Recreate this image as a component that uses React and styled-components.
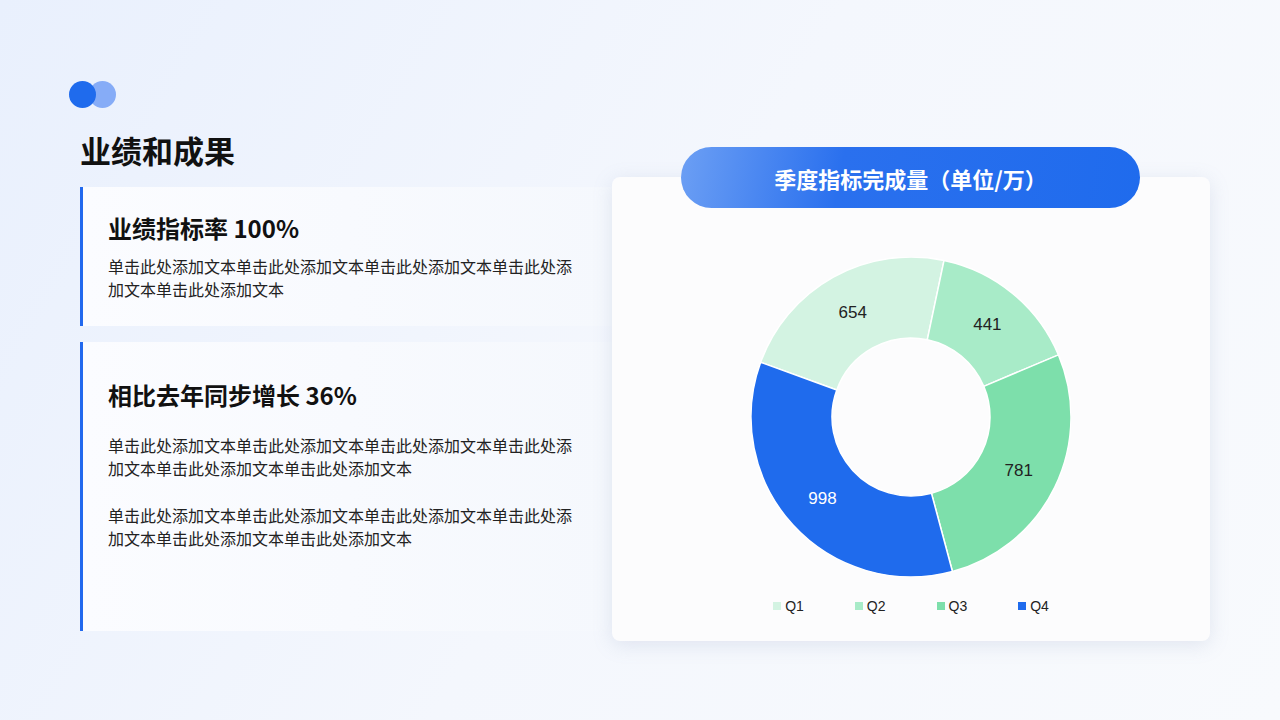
import React from "react";
import styled, { createGlobalStyle } from "styled-components";

const Global = createGlobalStyle`
  body { margin: 0; font-family: "Noto Sans CJK SC", "Noto Sans", sans-serif; }
`;

const Page = styled.div`
  width: 1280px; height: 720px; overflow: hidden; box-sizing: border-box;
  background: linear-gradient(120deg, #e9f0fd 0%, #f4f7fd 50%, #f8fafd 100%);
  padding: 80px 70px 0 80px; display: flex; flex-direction: column;
`;
const Dots = styled.div`position: relative; height: 28px; width: 48px; margin-left: -11px;`;
const Dot = styled.div`
  position: absolute; top: 1px; left: ${p => p.$l}px; width: 27px; height: 27px; border-radius: 50%;
  background: ${p => p.$c};
`;
const Title = styled.h1`margin: 22px 0 0; font-size: 31px; font-weight: 700; color: #111; line-height: 40px;`;
const Main = styled.div`display: flex; margin-top: 7px; height: 454px; position: relative;`;
const Left = styled.div`width: 532px; display: flex; flex-direction: column; gap: 16px; padding-top: 10px;`;
const Card = styled.div`
  border-left: 3px solid #2269ee; background: linear-gradient(90deg, #fbfcff, #f5f8fd);
  padding: ${p => p.$pt}px 30px 0 25px; height: ${p => p.$h}px; box-sizing: border-box;
`;
const CardTitle = styled.h2`margin: 0 0 ${p => p.$mb}px; font-size: 24px; font-weight: 700; color: #111; line-height: 30px;`;
const Para = styled.p`margin: 0 0 ${p => p.$mb || 0}px; width: 470px; font-size: 16px; color: #222; line-height: 23px;`;
const Right = styled.div`
  position: relative; width: 598px; height: 464px; background: #fcfcfd; border-radius: 8px;
  box-shadow: 0 4px 20px rgba(120,140,180,0.18); display: flex; flex-direction: column; align-items: center;
`;
const Pill = styled.div`
  position: absolute; top: -30px; left: 69px; width: 459px; height: 61px; border-radius: 31px;
  background: linear-gradient(100deg, #6c9ff4 0%, #2a70ee 35%, #1f6bed 100%);
  color: #fff; font-size: 22px; font-weight: 700; display: flex; align-items: center; justify-content: center;
`;
const Legend = styled.div`display: flex; gap: 51px; margin-top: 21px; font-family: "Liberation Sans", sans-serif; font-size: 14px; color: #222;`;
const LegItem = styled.div`display: flex; align-items: center; gap: 4px;`;
const Sw = styled.span`width: 8px; height: 8px; background: ${p => p.$c};`;

const data = [
  { n: "Q1", v: 654, c: "#d3f3e2" },
  { n: "Q2", v: 441, c: "#a8ebc8" },
  { n: "Q3", v: 781, c: "#7ddfab" },
  { n: "Q4", v: 998, c: "#1f6bed", t: "#fff" },
];

function Donut() {
  const cx = 160, cy = 160, R = 160, r = 79;
  const total = data.reduce((s, d) => s + d.v, 0);
  let a = -70;
  const pt = (ang, rad) => {
    const t = (ang * Math.PI) / 180;
    return [cx + rad * Math.sin(t), cy - rad * Math.cos(t)];
  };
  return (
    <svg width="320" height="320" style={{ marginTop: 80 }}>
      {data.map(d => {
        const sweep = (d.v / total) * 360;
        const a0 = a, a1 = a + sweep; a = a1;
        const [x0, y0] = pt(a0, R), [x1, y1] = pt(a1, R);
        const [x2, y2] = pt(a1, r), [x3, y3] = pt(a0, r);
        const lg = sweep > 180 ? 1 : 0;
        const [lx, ly] = pt((a0 + a1) / 2, 120);
        return (
          <g key={d.n}>
            <path d={`M${x0},${y0} A${R},${R} 0 ${lg} 1 ${x1},${y1} L${x2},${y2} A${r},${r} 0 ${lg} 0 ${x3},${y3}Z`} fill={d.c} stroke="#fff" strokeWidth="1.5" />
            <text x={lx} y={ly + 6} textAnchor="middle" fontSize="17" fontFamily="Liberation Sans, sans-serif" fill={d.t || "#222"}>{d.v}</text>
          </g>
        );
      })}
    </svg>
  );
}

export default function App() {
  const t = "单击此处添加文本单击此处添加文本单击此处添加文本单击此处添加文本单击此处添加文本";
  const t2 = "单击此处添加文本单击此处添加文本单击此处添加文本单击此处添加文本单击此处添加文本单击此处添加文本";
  return (
    <Page>
      <Global />
      <Dots><Dot $l={20} $c="#86acf7" /><Dot $l={0} $c="#1f6bed" /></Dots>
      <Title>业绩和成果</Title>
      <Main>
        <Left>
          <Card $h={142} $pt={26}>
            <CardTitle $mb={12}>业绩指标率 100%</CardTitle>
            <Para>{t}</Para>
          </Card>
          <Card $h={296} $pt={38}>
            <CardTitle $mb={24}>相比去年同步增长 36%</CardTitle>
            <Para $mb={24}>{t2}</Para>
            <Para>{t2}</Para>
          </Card>
        </Left>
        <Right>
          <Pill>季度指标完成量（单位/万）</Pill>
          <Donut />
          <Legend>
            {data.map(d => <LegItem key={d.n}><Sw $c={d.c} />{d.n}</LegItem>)}
          </Legend>
        </Right>
      </Main>
    </Page>
  );
}
